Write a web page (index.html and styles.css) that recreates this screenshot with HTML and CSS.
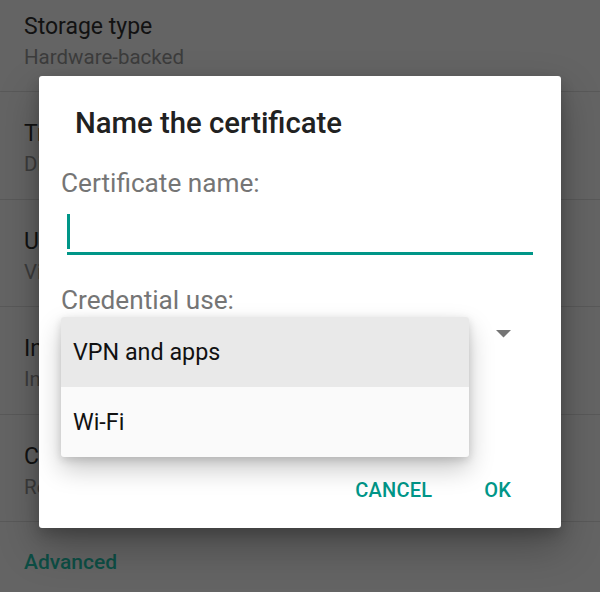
FILE: index.html
```html
<!DOCTYPE html>
<html>
<head>
<meta charset="utf-8">
<link rel="stylesheet" href="styles.css">
</head>
<body>
<div class="screen">
  <div class="list">
    <div class="row"><div class="row-title">Storage type</div><div class="row-sub">Hardware-backed</div></div>
    <div class="row"><div class="row-title">Trusted credentials</div><div class="row-sub">Display trusted CA certificates</div></div>
    <div class="row"><div class="row-title">User credentials</div><div class="row-sub">View and modify stored credentials</div></div>
    <div class="row"><div class="row-title">Install from storage</div><div class="row-sub">Install certificates from storage</div></div>
    <div class="row"><div class="row-title">Clear credentials</div><div class="row-sub">Remove all certificates</div></div>
    <div class="advanced">Advanced</div>
  </div>

  <div class="dialog">
    <div class="dialog-title">Name the certificate</div>
    <div class="label">Certificate name:</div>
    <div class="field"><span class="cursor"></span></div>
    <div class="label label-use">Credential use:</div>
    <div class="spinner">
      <svg class="arrow" width="15" height="8" viewBox="0 0 15 8"><polygon points="0,0 15,0 7.5,7.5" fill="#757575"/></svg>
    </div>
    <div class="buttons">
      <span class="btn">CANCEL</span>
      <span class="btn">OK</span>
    </div>
  </div>

  <div class="menu">
    <div class="menu-item selected">VPN and apps</div>
    <div class="menu-item">Wi-Fi</div>
  </div>
</div>
</body>
</html>
```

FILE: styles.css
```css
html, body {
  margin: 0;
  padding: 0;
}
body {
  background: #646464;
  font-family: Roboto, "Noto Sans", sans-serif;
  width: 600px;
  height: 592px;
  overflow: hidden;
}
.screen {
  position: relative;
  width: 600px;
  height: 592px;
  overflow: hidden;
}
.list {
  margin-top: -15px;
}
.row {
  height: 106.4px;
  border-bottom: 1px solid #595959;
  padding-left: 24px;
  box-sizing: content-box;
}
.row-title {
  padding-top: 26px;
  font-size: 23px;
  line-height: 32px;
  color: #121212;
}
.row-sub {
  font-size: 20.5px;
  line-height: 28px;
  color: #3c3c3c;
}
.advanced {
  padding-left: 24px;
  padding-top: 26px;
  font-size: 21px;
  line-height: 28px;
  font-weight: 500;
  color: #0d4e45;
}

.dialog {
  position: absolute;
  left: 39px;
  top: 76px;
  width: 522px;
  height: 452px;
  background: #ffffff;
  border-radius: 3px;
  box-shadow: 0 18px 40px rgba(0,0,0,0.28), 0 6px 14px rgba(0,0,0,0.18);
  box-sizing: border-box;
  padding-top: 29px;
  display: flex;
  flex-direction: column;
}
.dialog-title {
  padding-left: 36px;
  font-size: 29.3px;
  line-height: 36px;
  font-weight: 500;
  color: #212121;
}
.label {
  padding-left: 22px;
  margin-top: 26px;
  font-size: 26.2px;
  line-height: 32px;
  color: #757575;
}
.field {
  margin: 10px 28px 0 28px;
  height: 43px;
  border-bottom: 3px solid #009688;
  display: flex;
  align-items: flex-start;
}
.cursor {
  display: block;
  width: 3px;
  height: 35px;
  margin-top: 5px;
  background: #009688;
}
.label-use {
  margin-top: 29px;
}
.spinner {
  height: 46px;
  display: flex;
  justify-content: flex-end;
  align-items: flex-start;
  padding-right: 50px;
}
.arrow {
  display: block;
  margin-top: 14px;
}
.buttons {
  margin-top: 114px;
  display: flex;
  justify-content: flex-end;
  gap: 52px;
  padding-right: 50px;
}
.btn {
  font-size: 20px;
  line-height: 28px;
  font-weight: 500;
  color: #009688;
  letter-spacing: 0.2px;
}

.menu {
  position: absolute;
  left: 61px;
  top: 317px;
  width: 408px;
  background: #fafafa;
  border-radius: 3px;
  overflow: hidden;
  box-shadow: 0 12px 26px rgba(0,0,0,0.22), 0 3px 8px rgba(0,0,0,0.14);
}
.menu-item {
  height: 70px;
  display: flex;
  align-items: center;
  padding-left: 12px;
  font-size: 23.3px;
  color: #111111;
}
.menu-item.selected {
  background: #e9e9e9;
}
```
